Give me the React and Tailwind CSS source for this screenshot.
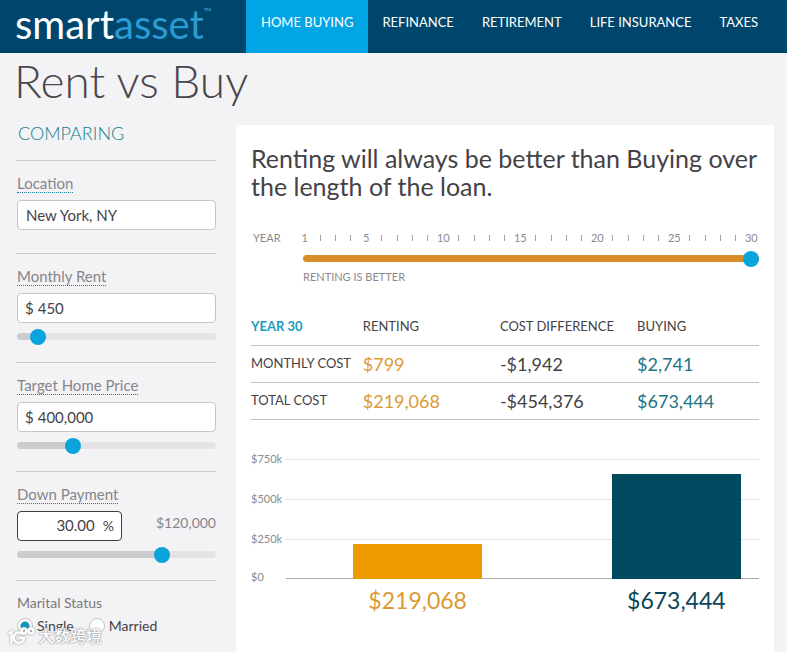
import { useState } from 'react';

const navItems = ['REFINANCE', 'RETIREMENT', 'LIFE INSURANCE', 'TAXES'];

const rows = [
  { label: 'MONTHLY COST', renting: '$799', difference: '-$1,942', buying: '$2,741' },
  { label: 'TOTAL COST', renting: '$219,068', difference: '-$454,376', buying: '$673,444' },
];

const bars = [
  { name: 'Renting', value: 219068, bar: 'bg-[#ee9b00]', text: 'text-[#dc9a35]' },
  { name: 'Buying', value: 673444, bar: 'bg-[#004a60]', text: 'text-[#0b4458]' },
];

const chartMax = 770000;
const gridLabels = ['$750k', '$500k', '$250k'];
const years = Array.from({ length: 30 }, (_, i) => i + 1);

function Slider({ label, value, onChange, fill, rest, min = 0, max = 100, className = '' }) {
  const percent = ((value - min) / (max - min)) * 100;

  return (
    <input
      type="range"
      aria-label={label}
      min={min}
      max={max}
      value={value}
      onChange={(e) => onChange(Number(e.target.value))}
      className={`block h-[7px] appearance-none rounded-full [&::-webkit-slider-thumb]:size-4 [&::-webkit-slider-thumb]:appearance-none [&::-webkit-slider-thumb]:rounded-full [&::-webkit-slider-thumb]:bg-[#0ba3dc] ${className}`}
      style={{ background: `linear-gradient(to right, ${fill} ${percent}%, ${rest} ${percent}%)` }}
    />
  );
}

function Field({ id, label, children, className = 'pb-[22px]' }) {
  return (
    <div className={`border-t border-[#c9c8cc] pt-[13px] ${className}`}>
      <label htmlFor={id} className="mb-[7px] ml-px inline-block border-b border-dotted border-[#1c8494] align-top text-[15px] leading-[18px] text-[#87858a]">
        {label}
      </label>
      {children}
    </div>
  );
}

function MoneyInput({ id, value, onChange }) {
  return (
    <div className="ml-px flex h-[30px] items-center rounded border border-[#c6c5c9] bg-white pl-[7px] text-[15px] text-[#444246]">
      <span>$</span>
      <input
        id={id}
        value={value}
        onChange={(e) => onChange(e.target.value)}
        className="ml-1 min-w-0 flex-1 bg-transparent outline-none"
      />
    </div>
  );
}

function Sidebar() {
  const [location, setLocation] = useState('New York, NY');
  const [rent, setRent] = useState('450');
  const [price, setPrice] = useState('400,000');
  const [down, setDown] = useState('30.00');
  const [rentLevel, setRentLevel] = useState(7);
  const [priceLevel, setPriceLevel] = useState(26);
  const [downLevel, setDownLevel] = useState(75);
  const [status, setStatus] = useState('Single');

  const grey = { fill: '#cccbce', rest: '#e4e3e6' };

  return (
    <aside className="w-[200px] shrink-0">
      <h2 className="mb-[19px] ml-0.5 text-lg leading-4 font-light text-[#12808f]">COMPARING</h2>

      <Field id="location" label="Location" className="pb-[23px]">
        <input
          id="location"
          value={location}
          onChange={(e) => setLocation(e.target.value)}
          className="ml-px block h-[30px] w-[calc(100%-1px)] rounded border border-[#c6c5c9] bg-white px-2 text-[15px] text-[#444246] outline-none"
        />
      </Field>

      <Field id="rent" label="Monthly Rent">
        <MoneyInput id="rent" value={rent} onChange={setRent} />
        <Slider label="Monthly rent level" value={rentLevel} onChange={setRentLevel} {...grey} className="mt-[10px] ml-px w-[calc(100%-1px)]" />
      </Field>

      <Field id="price" label="Target Home Price">
        <MoneyInput id="price" value={price} onChange={setPrice} />
        <Slider label="Home price level" value={priceLevel} onChange={setPriceLevel} {...grey} className="mt-[10px] ml-px w-[calc(100%-1px)]" />
      </Field>

      <Field id="down" label="Down Payment">
        <div className="ml-px flex items-center justify-between">
          <div className="flex h-[30px] w-[105px] items-center rounded border border-[#3f3d41] bg-white pr-[7px] text-sm text-[#444246]">
            <input
              id="down"
              value={down}
              onChange={(e) => setDown(e.target.value)}
              className="min-w-0 flex-1 bg-transparent text-right text-[15px] outline-none"
            />
            <span className="ml-2">%</span>
          </div>
          <span className="mb-1.5 text-sm text-[#87858a]">$120,000</span>
        </div>
        <Slider label="Down payment level" value={downLevel} onChange={setDownLevel} {...grey} className="mt-[10px] ml-px w-[calc(100%-1px)]" />
      </Field>

      <fieldset className="border-t border-[#c9c8cc] pt-[13px]">
        <legend className="float-left ml-px w-full text-sm leading-[18px] text-[#7b797e]">Marital Status</legend>
        <div className="clear-both flex items-center gap-3.5 pt-1 text-sm text-[#444246]">
          {['Single', 'Married'].map((option) => (
            <label key={option} className="ml-px flex items-center gap-1">
              <input
                type="radio"
                name="status"
                checked={status === option}
                onChange={() => setStatus(option)}
                className="size-4 appearance-none rounded-full border border-[#c6c5c9] bg-white checked:bg-[radial-gradient(circle,#1494c0_4px,white_5px)]"
              />
              {option}
            </label>
          ))}
        </div>
      </fieldset>
    </aside>
  );
}

function YearScale() {
  const [year, setYear] = useState(30);

  return (
    <div className="mt-[30px] text-[11px] text-[#8b898e]">
      <div className="flex items-center leading-4">
        <span className="w-[46px] shrink-0 pl-0.5">YEAR</span>
        <div className="grid flex-1 grid-cols-[repeat(30,minmax(0,1fr))] items-center">
          {years.map((y) => (
            <span key={y} className="flex justify-center">
              {y === 1 || y % 5 === 0 ? y : <span className="h-[6px] w-px bg-[#a5a3a8]" />}
            </span>
          ))}
        </div>
      </div>
      <div className="mt-[9px] ml-[52px]">
        <Slider label="Year" min={1} max={30} value={year} onChange={setYear} fill="#d98d28" rest="#e4e3e6" className="w-full" />
        <p className="mt-[7px] leading-4">RENTING IS BETTER</p>
      </div>
    </div>
  );
}

function CostTable() {
  return (
    <table className="mt-[23px] w-full table-fixed border-collapse text-left text-[13px] text-[#444246]">
      <thead>
        <tr className="h-[37px] border-b border-[#c4bfc6]">
          <th className="w-[22%] font-bold text-[#1a9cc0]">YEAR 30</th>
          <th className="w-[27%] font-normal">RENTING</th>
          <th className="w-[27%] font-normal">COST DIFFERENCE</th>
          <th className="w-[24%] font-normal">BUYING</th>
        </tr>
      </thead>
      <tbody>
        {rows.map((row) => (
          <tr key={row.label} className="h-[37px] border-b border-[#c4bfc6]">
            <th className="font-normal whitespace-nowrap">{row.label}</th>
            <td className="text-lg leading-6 text-[#dc9a35]">{row.renting}</td>
            <td className="text-lg leading-6">{row.difference}</td>
            <td className="text-lg leading-6 text-[#1d7484]">{row.buying}</td>
          </tr>
        ))}
      </tbody>
    </table>
  );
}

function CostChart() {
  return (
    <div className="mt-[31px] flex text-[11px] text-[#8b898e]">
      <div className="w-[35px] shrink-0">
        {gridLabels.map((label) => (
          <div key={label} className="h-10 leading-4">{label}</div>
        ))}
        <div className="-mt-0.5 leading-4">$0</div>
      </div>
      <div className="mt-2 flex-1">
        <div className="grid h-[120px] border-b border-[#aaa8ad]">
          <div className="col-start-1 row-start-1">
            {gridLabels.map((label) => (
              <div key={label} className="h-10 border-t border-[#e4e1e7]" />
            ))}
          </div>
          <div className="col-start-1 row-start-1 flex items-end justify-between pr-[18px] pl-[67px]">
            {bars.map((item) => (
              <div key={item.name} className={`w-1/3 ${item.bar}`} style={{ height: `${(item.value / chartMax) * 100}%` }} />
            ))}
          </div>
        </div>
        <div className="flex justify-between pt-[3px] pr-[18px] pl-[67px] text-[23px] leading-9">
          {bars.map((item) => (
            <p key={item.name} className={`flex w-1/3 justify-center ${item.text}`}>
              ${item.value.toLocaleString('en-US')}
            </p>
          ))}
        </div>
      </div>
    </div>
  );
}

function Watermark() {
  return (
    <div className="pointer-events-none absolute top-[624px] left-2 flex items-center gap-0.5 text-white [text-shadow:0_0_2px_#8d8b90,0_0_1px_#8d8b90]">
      <svg width="28" height="20" viewBox="0 0 28 20" fill="none" className="drop-shadow-[0_0_1px_#8d8b90]">
        <g stroke="#fff" strokeWidth="2.5" strokeLinecap="round">
          <path d="M1.5 7 3.5 6v11" />
          <path d="M13 7a5.2 5.2 0 1 0 3 5h-4" />
          <circle cx="16" cy="5" r="2.5" />
          <circle cx="23" cy="5" r="2.5" />
        </g>
      </svg>
      <span className="text-base leading-6 font-medium">大数跨境</span>
    </div>
  );
}

export default function App() {
  return (
    <div className="relative flex min-h-screen flex-col bg-[#f3f2f5] font-['Lato','Noto_Sans_CJK_SC',sans-serif]">
      <header className="flex h-[53px] bg-[#00466c]">
        <a href="#" className="flex w-[246px] shrink-0 items-start pl-[15px] text-[40px] leading-[48px] text-white">
          smart<span className="text-[#2b9bd3]">asset</span>
          <span className="mt-1 text-[11px] leading-4 text-[#2b9bd3]">™</span>
        </a>
        <nav className="flex text-[13px] leading-[45px] whitespace-nowrap text-white">
          <a href="#" className="bg-[#00a5e6] px-[15px]">HOME BUYING</a>
          {navItems.map((item) => (
            <a key={item} href="#" className="px-3.5">
              {item}
            </a>
          ))}
        </nav>
      </header>

      <h1 className="h-[72px] pl-3.5 text-[46px] leading-[56px] font-light text-[#4a474b]">Rent vs Buy</h1>

      <main className="flex flex-1 gap-5 pr-[13px] pl-4">
        <Sidebar />
        <section className="min-w-0 flex-1 bg-white px-[15px] pt-[19px]">
          <h2 className="text-[25px] leading-7 text-[#444246]">
            Renting will always be better than Buying over the length of the loan.
          </h2>
          <YearScale />
          <CostTable />
          <CostChart />
        </section>
      </main>
      <Watermark />
    </div>
  );
}
